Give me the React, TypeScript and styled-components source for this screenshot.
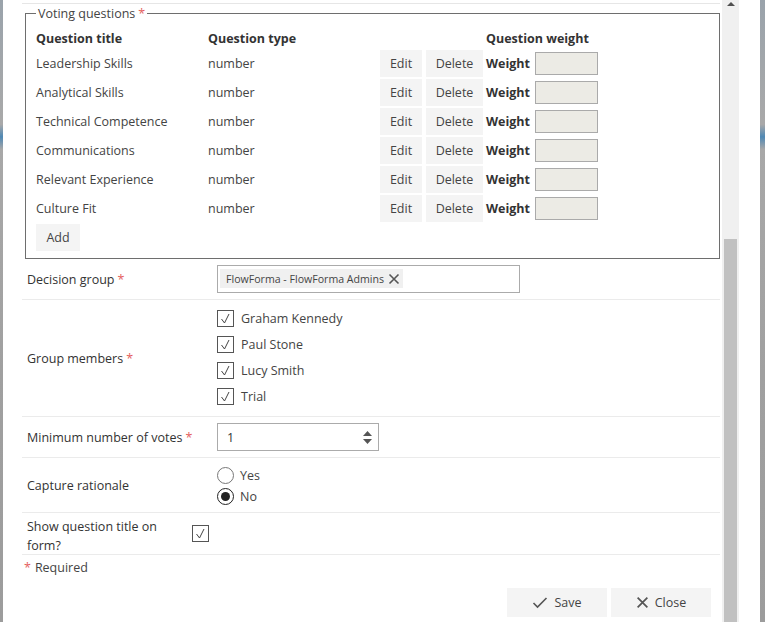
import React from "react";
import styled, { createGlobalStyle } from "styled-components";

const GlobalStyle = createGlobalStyle`
  html, body {
    margin: 0;
    padding: 0;
    background: #ffffff;
  }
  body {
    font-family: "Open Sans", "Noto Sans", Arial, sans-serif;
    font-size: 12px;
    color: #333333;
  }
  * {
    box-sizing: border-box;
  }
`;

const questions = [
  "Leadership Skills",
  "Analytical Skills",
  "Technical Competence",
  "Communications",
  "Relevant Experience",
  "Culture Fit",
];

const members = ["Graham Kennedy", "Paul Stone", "Lucy Smith", "Trial"];

const Page = styled.div`
  display: flex;
  width: 765px;
  height: 622px;
  overflow: hidden;
`;

const EdgeStrip = styled.div<{ $w: number }>`
  width: ${(p) => p.$w}px;
  flex-shrink: 0;
  background: linear-gradient(
    180deg,
    #9aa3ab 0%,
    #a9a9a9 20%,
    #4f88b4 22%,
    #a8a8a8 24%,
    #a0a0a0 60%,
    #9c9c9c 100%
  );
`;

const Dialog = styled.div`
  width: 719px;
  flex-shrink: 0;
  background: #fff;
  padding: 3px 2px 0 19px;
  display: flex;
  flex-direction: column;
`;

const TopRule = styled.div`
  height: 1px;
  background: #e6e6e6;
`;

const Fieldset = styled.fieldset`
  margin: 1px 0 0 3px;
  padding: 0 0 8px 10px;
  border: 1px solid #6e6e6e;
  height: 254px;
  min-width: 0;
`;

const Legend = styled.legend`
  padding: 0 2px;
  margin-left: 0;
  color: #444;
  font-size: 12.5px;
  line-height: 17px;
`;

const Req = styled.span`
  color: #e45e5e;
  margin-left: 3px;
`;

const Grid = styled.div`
  display: grid;
  grid-template-columns: 172px 172px 46px 60px auto;
  align-items: center;
  margin-top: 8px;
`;

const HeadCell = styled.div`
  font-weight: 700;
  color: #333;
  font-size: 12.5px;
  height: 19px;
  line-height: 18px;
`;

const Cell = styled.div`
  color: #444;
  height: 29px;
  line-height: 30px;
  font-size: 12.5px;
`;

const GrayButton = styled.button<{ $w: number }>`
  width: ${(p) => p.$w}px;
  height: 27px;
  border: none;
  background: #f4f4f4;
  color: #444;
  font-family: inherit;
  font-size: 12.5px;
  padding: 0;
  margin: 1px 0;
`;

const WeightCell = styled.div`
  display: flex;
  align-items: center;
  gap: 5px;
  font-weight: 700;
  font-size: 12.5px;
  color: #333;
`;

const WeightBox = styled.div`
  width: 63px;
  height: 23px;
  background: #ecebe5;
  border: 1px solid #aaaaaa;
`;

const AddRow = styled.div`
  padding-top: 0;
`;

const Row = styled.div<{ $h: number }>`
  display: flex;
  align-items: center;
  height: ${(p) => p.$h}px;
  border-bottom: 1px solid #ebebeb;
  padding-left: 5px;
`;

const Label = styled.div<{ $w?: number; $shift?: number }>`
  width: ${(p) => p.$w ?? 190}px;
  flex-shrink: 0;
  color: #333;
  font-size: 12.5px;
  line-height: 19px;
  padding-top: ${(p) => p.$shift ?? 0}px;
`;

const PeopleBox = styled.div`
  width: 303px;
  height: 28px;
  border: 1px solid #ababab;
  padding: 3px 2px;
  display: flex;
`;

const Chip = styled.div`
  display: flex;
  align-items: center;
  gap: 4px;
  background: #f0f0f0;
  padding: 0 3px 0 6px;
  font-size: 10.6px;
  color: #444;
  height: 19px;
`;

const CheckList = styled.div`
  display: flex;
  flex-direction: column;
  padding-bottom: 2px;
`;

const CheckItem = styled.label`
  display: flex;
  align-items: center;
  gap: 7px;
  height: 26px;
  color: #444;
  font-size: 12.5px;
`;

const Box = styled.span`
  width: 17px;
  height: 17px;
  border: 1px solid #555;
  display: inline-flex;
  align-items: center;
  justify-content: center;
  background: #fff;
`;

const NumberBox = styled.div`
  width: 162px;
  height: 28px;
  border: 1px solid #ababab;
  display: flex;
  align-items: center;
  justify-content: space-between;
  padding: 0 6px 0 9px;
  color: #333;
  font-size: 12.5px;
`;

const Spinner = styled.div`
  display: flex;
  flex-direction: column;
  gap: 3px;
`;

const Radio = styled.span<{ $on?: boolean }>`
  width: 17px;
  height: 17px;
  border-radius: 50%;
  border: 1px solid ${(p) => (p.$on ? "#222" : "#777")};
  display: inline-flex;
  align-items: center;
  justify-content: center;
  &::after {
    content: "";
    width: 9px;
    height: 9px;
    border-radius: 50%;
    background: ${(p) => (p.$on ? "#222" : "transparent")};
  }
`;

const RadioGroup = styled.div`
  padding-top: 2px;
`;

const RadioItem = styled.label`
  display: flex;
  align-items: center;
  gap: 6px;
  height: 21px;
  color: #444;
  font-size: 12.5px;
`;

const Required = styled.div`
  padding: 4px 0 0 2px;
  color: #444;
  font-size: 12.5px;
  height: 33px;
`;

const Footer = styled.div`
  display: flex;
  justify-content: flex-end;
  gap: 4px;
  padding-right: 9px;
`;

const FooterButton = styled.button`
  width: 100px;
  height: 29px;
  border: none;
  background: #f4f4f4;
  color: #444;
  font-family: inherit;
  font-size: 12.5px;
  display: flex;
  align-items: center;
  justify-content: center;
  gap: 6px;
  padding: 0;
`;

const ScrollTrack = styled.div`
  width: 17px;
  flex-shrink: 0;
  background: #f0f0f0;
  display: flex;
  flex-direction: column;
  align-items: center;
`;

const ScrollArrow = styled.div`
  width: 0;
  height: 0;
  margin-top: 2px;
  border-left: 4px solid transparent;
  border-right: 4px solid transparent;
  border-bottom: 4px solid #505050;
`;

const ScrollThumb = styled.div`
  width: 13px;
  margin-top: 233px;
  flex: 1;
  background: #c1c1c1;
`;

const Gap = styled.div`
  width: 21px;
  flex-shrink: 0;
  background: #fff;
`;

const Tick = () => (
  <svg width="13" height="13" viewBox="0 0 13 13">
    <polyline points="2.5,7 5.5,11 10,2" fill="none" stroke="#444" strokeWidth="1" />
  </svg>
);

const Cross = ({ size = 12, color = "#555", w = 1.6 }) => (
  <svg width={size} height={size} viewBox="0 0 12 12">
    <path d="M1.5 1.5 L10.5 10.5 M10.5 1.5 L1.5 10.5" stroke={color} strokeWidth={w} />
  </svg>
);

export default function App() {
  return (
    <>
      <GlobalStyle />
      <Page>
        <EdgeStrip $w={3} />
        <Dialog>
          <TopRule />
          <Fieldset>
            <Legend>
              Voting questions<Req>*</Req>
            </Legend>
            <Grid>
              <HeadCell>Question title</HeadCell>
              <HeadCell>Question type</HeadCell>
              <HeadCell />
              <HeadCell />
              <HeadCell>Question weight</HeadCell>
              {questions.map((q) => (
                <React.Fragment key={q}>
                  <Cell>{q}</Cell>
                  <Cell>number</Cell>
                  <GrayButton $w={42}>Edit</GrayButton>
                  <GrayButton $w={57}>Delete</GrayButton>
                  <WeightCell>
                    Weight
                    <WeightBox />
                  </WeightCell>
                </React.Fragment>
              ))}
            </Grid>
            <AddRow>
              <GrayButton $w={44}>Add</GrayButton>
            </AddRow>
          </Fieldset>

          <Row $h={41}>
            <Label>
              Decision group<Req>*</Req>
            </Label>
            <PeopleBox>
              <Chip>
                FlowForma - FlowForma Admins
                <Cross size={12} color="#555" w={1.6} />
              </Chip>
            </PeopleBox>
          </Row>

          <Row $h={117}>
            <Label>
              Group members<Req>*</Req>
            </Label>
            <CheckList>
              {members.map((m) => (
                <CheckItem key={m}>
                  <Box>
                    <Tick />
                  </Box>
                  {m}
                </CheckItem>
              ))}
            </CheckList>
          </Row>

          <Row $h={41}>
            <Label>
              Minimum number of votes<Req>*</Req>
            </Label>
            <NumberBox>
              1
              <Spinner>
                <svg width="9" height="5" viewBox="0 0 9 5">
                  <polygon points="0,5 4.5,0 9,5" fill="#555" />
                </svg>
                <svg width="9" height="5" viewBox="0 0 9 5">
                  <polygon points="0,0 4.5,5 9,0" fill="#555" />
                </svg>
              </Spinner>
            </NumberBox>
          </Row>

          <Row $h={55}>
            <Label>Capture rationale</Label>
            <RadioGroup>
              <RadioItem>
                <Radio />
                Yes
              </RadioItem>
              <RadioItem>
                <Radio $on />
                No
              </RadioItem>
            </RadioGroup>
          </Row>

          <Row $h={42}>
            <Label $w={165} $shift={4}>
              Show question title on form?
            </Label>
            <Box>
              <Tick />
            </Box>
          </Row>

          <Required>
            <Req style={{ marginLeft: 0, marginRight: 4 }}>*</Req>Required
          </Required>

          <Footer>
            <FooterButton>
              <svg width="16" height="14" viewBox="0 0 16 14">
                <polyline points="1.5,7 5.5,11 14.5,2" fill="none" stroke="#555" strokeWidth="1.6" />
              </svg>
              Save
            </FooterButton>
            <FooterButton>
              <Cross size={13} color="#555" w={1.6} />
              Close
            </FooterButton>
          </Footer>
        </Dialog>
        <ScrollTrack>
          <ScrollArrow />
          <ScrollThumb />
        </ScrollTrack>
        <Gap />
        <EdgeStrip $w={5} />
      </Page>
    </>
  );
}
